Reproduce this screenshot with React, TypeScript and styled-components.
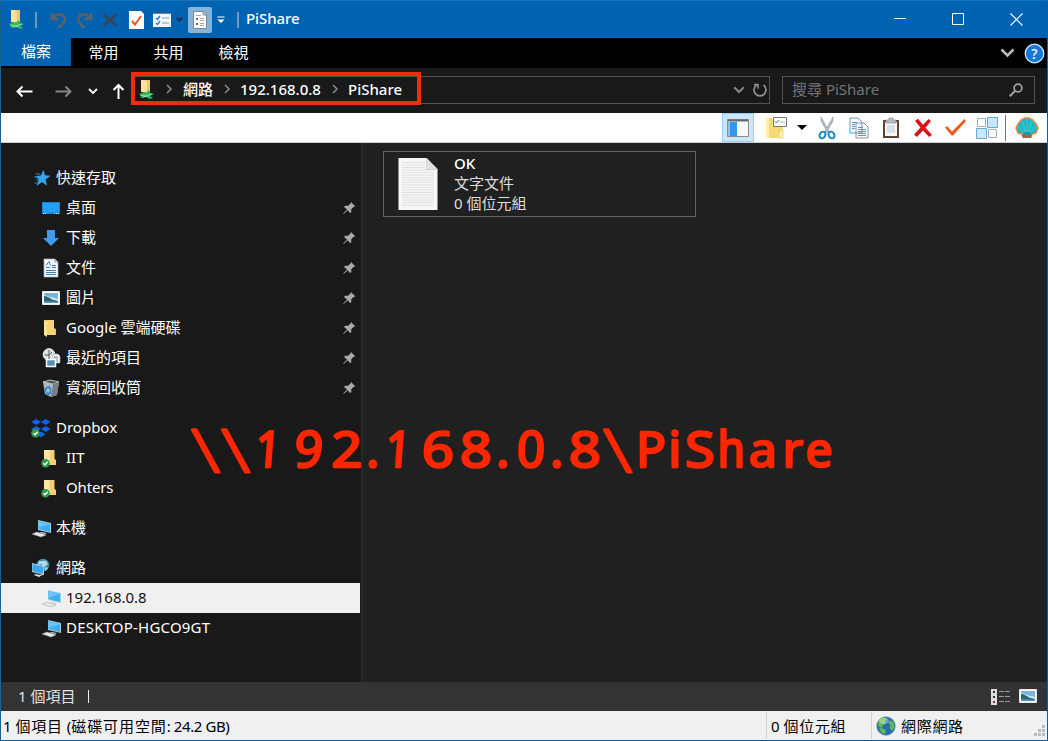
import React from "react";
import styled, { createGlobalStyle } from "styled-components";

const GlobalStyle = createGlobalStyle`
  * { box-sizing: border-box; }
  body { margin: 0; background: #191919; overflow: hidden; }
  svg { display: block; flex: none; }
`;

const Window = styled.div`
  position: relative;
  width: 1048px;
  height: 741px;
  display: flex;
  flex-direction: column;
  border: 1px solid #0063b1;
  border-top: 0;
  border-left-color: #1d608e;
  background: #191919;
  color: #fff;
  font-family: "Noto Sans", "Noto Sans CJK TC", sans-serif;
  font-size: 15px;
  line-height: 20px;
  white-space: nowrap;
`;

const TitleBar = styled.header`
  height: 38px;
  display: flex;
  align-items: center;
  background: #0063b1;
  border-top: 1px solid #1872b8;
`;

const QuickButton = styled.span<{ $w: number; $active?: boolean }>`
  width: ${(p) => p.$w}px;
  height: 26px;
  display: flex;
  align-items: center;
  justify-content: center;
  border-radius: 2px;
  background: ${(p) => (p.$active ? "#83b5dd" : "transparent")};
`;

const TitleDivider = styled.span<{ $left: number; $right: number }>`
  width: 2px;
  height: 16px;
  margin: 0 ${(p) => p.$right}px 0 ${(p) => p.$left}px;
  background: #6e9ac2;
`;

const Title = styled.h1`
  margin: 0 0 3px;
  font-size: 15px;
  line-height: 20px;
  font-weight: 500;
  letter-spacing: -0.1px;
`;

const WindowControls = styled.div`
  margin: 0 1px 1px auto;
  display: flex;
`;

const WindowButton = styled.span`
  width: 58.5px;
  height: 36px;
  display: flex;
  align-items: center;
  justify-content: center;
`;

const TabBar = styled.nav`
  height: 30px;
  display: flex;
  background: #000;
`;

const Tab = styled.span<{ $file?: boolean }>`
  width: ${(p) => (p.$file ? 70 : 65)}px;
  height: 28px;
  padding-top: ${(p) => (p.$file ? 3 : 4)}px;
  text-align: center;
  background: ${(p) => (p.$file ? "#0063b1" : "transparent")};
`;

const TabTools = styled.div`
  margin: 0 2px 0 auto;
  display: flex;
  align-items: center;
  gap: 9px;
`;

const NavBar = styled.div`
  height: 45px;
  padding-bottom: 1px;
  display: flex;
  align-items: center;
  background: #191919;
`;

const NavArrow = styled.span<{ $w: number }>`
  width: ${(p) => p.$w}px;
  display: flex;
  justify-content: center;
  margin-top: 2px;
`;

const AddressBar = styled.div`
  position: relative;
  width: 637px;
  height: 28px;
  margin-left: 2px;
  display: flex;
  align-items: center;
  border: 1px solid #535353;
  padding-left: 4px;
`;

const AddressHighlight = styled.div`
  position: absolute;
  left: -3px;
  top: -5px;
  width: 290px;
  height: 33px;
  border: 4px solid #f02c0c;
`;

const Crumb = styled.span<{ $w: number }>`
  width: ${(p) => p.$w}px;
  margin-bottom: 2px;
  font-weight: 500;
`;

const CrumbArrow = styled.span<{ $w: number }>`
  width: ${(p) => p.$w}px;
  margin-bottom: 2px;
  display: flex;
`;

const AddressTools = styled.div`
  margin-left: auto;
  display: flex;
  align-items: center;
  gap: 7px;
  padding-right: 1px;
`;

const SearchBox = styled.div`
  width: 253px;
  height: 28px;
  margin-left: 12px;
  padding: 0 11px 0 9px;
  display: flex;
  align-items: center;
  justify-content: space-between;
  border: 1px solid #535353;
  color: #757575;
`;

const SearchHint = styled.span`
  margin-bottom: 2px;
`;

const ToolBar = styled.div`
  height: 30px;
  display: flex;
  align-items: center;
  justify-content: flex-end;
  padding-right: 4px;
  background: #fff;
  border-bottom: 1px solid #cfcfcf;
`;

const Tool = styled.span<{ $w: number; $selected?: boolean }>`
  width: ${(p) => p.$w}px;
  height: 29px;
  display: flex;
  align-items: center;
  justify-content: center;
  border: 1px solid ${(p) => (p.$selected ? "#99cdf7" : "transparent")};
  background: ${(p) => (p.$selected ? "#cce6fc" : "transparent")};
`;

const ToolDivider = styled.span`
  width: 1px;
  height: 26px;
  margin: 0 5px 0 6px;
  background: #777;
`;

const Main = styled.main`
  flex: 1;
  display: flex;
  min-height: 0;
`;

const Sidebar = styled.aside`
  width: 359px;
  padding-top: 20px;
`;

const TreeGroup = styled.div`
  margin-bottom: 10px;
`;

const TreeRow = styled.div<{ $child?: boolean; $selected?: boolean }>`
  height: 30px;
  display: flex;
  align-items: center;
  padding: 0 4px 0 ${(p) => (p.$child ? 40 : 30)}px;
  background: ${(p) => (p.$selected ? "#f0f0f0" : "transparent")};
  color: ${(p) => (p.$selected ? "#101010" : "#fff")};
`;

const TreeIcon = styled.span`
  width: 20px;
  height: 20px;
  margin-right: 5px;
`;

const TreeLabel = styled.span`
  flex: 1;
  margin-top: -3px;
`;

const Splitter = styled.div`
  width: 3px;
  margin-right: 20px;
  border-left: 1px solid #191919;
  background: #2a2a2a;
`;

const Content = styled.section`
  flex: 1;
  display: flex;
  background: #202020;
`;

const FileTile = styled.article`
  width: 313px;
  height: 66px;
  margin-top: 8px;
  padding: 0 0 0 14px;
  display: flex;
  align-items: center;
  border: 1px solid #636363;
`;

const FileInfo = styled.div`
  margin: -3px 0 0 16px;
  display: flex;
  flex-direction: column;
  color: #dedede;
`;

const FileName = styled.strong`
  font-weight: 500;
  color: #fff;
`;

const ItemBar = styled.div`
  height: 29px;
  display: flex;
  align-items: center;
  padding: 0 10px 0 17px;
  background: #333;
  color: #e2e2e2;
`;

const ItemCount = styled.span`
  margin-bottom: 2px;
`;

const Caret = styled.span`
  width: 1px;
  height: 13px;
  margin-left: 13px;
  background: #eee;
`;

const ViewSwitch = styled.div`
  margin-left: auto;
  display: flex;
  gap: 9px;
`;

const StatusBar = styled.footer`
  height: 29px;
  display: flex;
  align-items: center;
  background: #f0f0f0;
  color: #000;
`;

const StatusCell = styled.div<{ $w?: number; $pad: number }>`
  ${(p) => (p.$w ? `width: ${p.$w}px;` : "flex: 1;")}
  height: 27px;
  padding-left: ${(p) => p.$pad}px;
  display: flex;
  align-items: center;
  gap: 5px;
  border-left: ${(p) => (p.$w ? "1px solid #d0d0d0" : "0")};
`;

const Spaced = styled.span<{ $ls: number }>`
  letter-spacing: ${(p) => p.$ls}px;
`;

const Grip = styled.span`
  margin: auto 1px 2px auto;
`;

const Note = styled.svg`
  position: absolute;
  left: 179px;
  top: 410px;
  font-family: "Noto Sans", sans-serif;
  font-size: 50px;
  fill: #ff2600;
  stroke: #ff2600;
  stroke-width: 2.6px;
  stroke-linejoin: round;
  text-anchor: middle;
`;

/* Each mark: glyph, centre x, horizontal scale, vertical scale, slant in degrees. */
const noteGlyphs: [string, number, number, number, number][] = [
  ["\\", 35, 1, 1.18, 15], ["\\", 65, 1, 1.18, 15], ["1", 88, 0.9, 1, -5], ["9", 129, 1, 1, -4],
  ["2", 167, 1.08, 1, 0], [".", 193, 1, 1, 0], ["1", 218, 0.9, 1, -5], ["6", 258, 1.12, 1, 0],
  ["8", 296, 1.12, 1, 0], [".", 323, 1, 1, 0], ["0", 352, 0.98, 1, -2], [".", 377, 1, 1, 0],
  ["8", 405, 1.12, 1, 0], ["\\", 447, 1, 1.18, 15], ["P", 471, 0.98, 1, 0], ["i", 495, 1, 1, 0],
  ["S", 520, 1.08, 1, 0], ["h", 551, 0.88, 1, 0], ["a", 583, 1, 0.93, 0], ["r", 613, 1, 0.93, 0],
  ["e", 639, 0.95, 0.93, 0],
];

const NetFolder = () => (
  <svg width="18" height="21" viewBox="0 0 18 21">
    <path d="M3 1h9v12H3z" fill="#f2c768" />
    <path d="M3 1h3l3 2v11l-6-1z" fill="#ffe398" />
    <path d="M1 15l8-2 1-2 2 2v1l4 1-4 2 3 2-3 1-4-2-4 1-2-1 2-1z" fill="#31b85a" />
    <path d="M2 16l6 1 6-2M5 18l5-1" stroke="#91deaa" fill="none" />
  </svg>
);

const Undo = ({ flip }: { flip?: boolean }) => (
  <svg width="17" height="18" viewBox="0 0 17 18">
    <g transform={flip ? "matrix(-1 0 0 1 17 0)" : undefined} fill="none" stroke="#59616a" strokeWidth="2.800">
      <path d="M2 2v6h6.500" />
      <path d="M2.500 7.500C6 3 11 2 13.500 5s1.500 7-5 11.500" />
    </g>
  </svg>
);

const Chevron = ({ w = 10, color = "#ccc", sw = 1.8 }: { w?: number; color?: string; sw?: number }) => (
  <svg width={w} height={w * 0.65} viewBox="0 0 10 6.5">
    <path d="M1 1l4 4 4-4" fill="none" stroke={color} strokeWidth={sw} />
  </svg>
);

const RightChevron = () => (
  <svg width="7" height="10" viewBox="0 0 7 10">
    <path d="M1 1l4 4-4 4" fill="none" stroke="#8c8c8c" strokeWidth="1.500" />
  </svg>
);

const Arrow = ({ color, up }: { color: string; up?: boolean }) => (
  <svg width="17" height="17" viewBox="0 0 17 17">
    <path
      d={up ? "M8.500 16V2M3.500 7L8.500 2 13.500 7" : "M1.500 8.500h15M6.500 3.500L1.500 8.500 6.500 13.500"}
      fill="none"
      stroke={color}
      strokeWidth="2"
    />
  </svg>
);

const FlippedArrow = styled.span`
  transform: scaleX(-1);
`;

const Star = () => (
  <svg width="20" height="20" viewBox="0 0 20 20">
    <path d="M12.500 2l1.400 5.300 5.600.4-5 3.800 1.500 6.300-5-3.700L5.500 18l2.300-6.300L4.500 8l5.200-.5z" fill="#35a7f2" />
    <path d="M4.500 6H9M3 9h4M5 12h3M3.500 15h3" stroke="#2384c6" strokeWidth="1.100" />
  </svg>
);

const Desktop = () => (
  <svg width="20" height="20" viewBox="0 0 20 20">
    <path d="M1 4h18v12H1z" fill="#1083d9" />
    <path d="M2 5h16v9L2 15z" fill="#22a0f5" />
    <path d="M2 15.500h3M13 15.500h5" stroke="#d7efff" strokeDasharray="1 1" />
  </svg>
);

const Download = () => (
  <svg width="20" height="20" viewBox="0 0 20 20">
    <path d="M6 2h8v8h4l-8 8-8-8h4z" fill="#3e9aea" />
  </svg>
);

const Doc = () => (
  <svg width="20" height="20" viewBox="0 0 20 20">
    <path d="M3 1h11l3 3v15H3z" fill="#f3f6f8" stroke="#aeb6bc" strokeWidth=".7" />
    <path d="M14 1v3h3" fill="none" stroke="#8d969d" />
    <path d="M5 7.500l3-4 1.500 4M5 9.500h4M5 12.500h10M5 14.500h10M5 16.500h10M11 7.500h4M11 9.500h4" stroke="#3f83b5" fill="none" />
  </svg>
);

const Picture = () => (
  <svg width="18" height="14" viewBox="0 0 18 14">
    <path d="M.5.500h17v13H.5z" fill="#fff" stroke="#e5e7e8" />
    <path d="M2 2h14v10H2z" fill="#78b6df" />
    <path d="M2 4l6 2 8 2v2H2z" fill="#d3ebf4" />
    <path d="M2 5c3 0 6 2 8 3.500l6 1.500v1H2z" fill="#31636a" />
    <path d="M2 10l14 .5V12H2z" fill="#4d93b5" />
  </svg>
);

const PicturePad = styled.span`
  display: block;
  padding: 3px 1px;
`;

const Folder = () => (
  <svg width="20" height="20" viewBox="0 0 20 20">
    <path d="M3 2h10v8l2 1v6H5z" fill="#efbd57" />
    <path d="M3 2l3 2v15l-3-2z" fill="#ffe29a" />
    <path d="M6 2h7v9l1 1v5H6z" fill="#f9d477" />
  </svg>
);

const Synced = ({ x, y }: { x: number; y: number }) => (
  <g>
    <circle cx={x} cy={y} r="4.300" fill="#2f9a47" />
    <path d={`M${x - 2} ${y}l1.500 1.500 2.700-3`} fill="none" stroke="#fff" strokeWidth="1.300" />
  </g>
);

const SyncedFolder = () => (
  <svg width="20" height="20" viewBox="0 0 20 20">
    <path d="M3.500 2h10v9l1.500 1v5H6z" fill="#f5cf75" />
    <path d="M3 2h5.500v13H3z" fill="#ffe6a4" />
    <Synced x={4.500} y={15.300} />
  </svg>
);

const Recent = () => (
  <svg width="20" height="20" viewBox="0 0 20 20">
    <circle cx="8" cy="6.500" r="5.800" fill="#dce4e7" stroke="#f5f5f5" />
    <path d="M8 2v5l3-3M3.500 7H8M8 7v4" stroke="#48565d" fill="none" />
    <path d="M12 6h5l2 2v7h-7z" fill="#f6f6f6" stroke="#9ca2a5" strokeWidth=".6" />
    <path d="M13 9h4M13 11h4M13 13h4" stroke="#748087" />
    <path d="M5.500 11.500h9v7h-9z" fill="#5a93b9" stroke="#fff" strokeWidth="1.500" />
  </svg>
);

const Bin = () => (
  <svg width="20" height="20" viewBox="0 0 20 20">
    <path d="M2 4l10 2 6-2-2 13-6 2-6-3z" fill="#aeb6b9" />
    <path d="M2 4l7-2 9 2-6 2z" fill="#4d5356" stroke="#dce0e2" strokeWidth=".8" />
    <path d="M12 6l6-2-2 13-6 2z" fill="#777f83" />
    <path d="M5 10l3-1 2 3M10 13l-2 3-3-1M4 14l1-4" stroke="#2283cf" strokeWidth="1.700" fill="none" />
  </svg>
);

const Dropbox = () => (
  <svg width="20" height="20" viewBox="0 0 20 20">
    <path d="M5.200 1L10 4 5.200 7 .4 4zM14.700 1l4.800 3-4.800 3L10 4zM5.200 8l4.800 3-4.800 3-4.800-3zM14.700 8l4.800 3-4.800 3-4.700-3zM10 13.500l4.500 2.700-4.500 3-4.500-3z" fill="#0c65e9" />
    <Synced x={4.500} y={15.300} />
  </svg>
);

const Computer = () => (
  <svg width="20" height="20" viewBox="1 0 20 20">
    <path d="M8 2l13 3v10L8 12z" fill="#a9cfe0" />
    <path d="M8.500 3l11.500 3v8l-11.500-3z" fill="#3caef3" />
    <path d="M9 3.500l10 3-10 3z" fill="#69c5fb" />
    <path d="M2 16l5-2 9 3-5 2z" fill="#e4e8ea" stroke="#9ca8ae" strokeWidth=".5" />
    <path d="M11 14l6 1-2 1-5-1z" fill="#c6d0d5" />
  </svg>
);

const Network = () => (
  <svg width="20" height="20" viewBox="1 0 20 20">
    <circle cx="13" cy="7" r="6.300" fill="#478ca8" />
    <path d="M9 3c2 1 5-1 7 0l2 3-4 3-3-3-3 1zM15 9l3 1-3 3z" fill="#b7dbe5" />
    <path d="M2 5l12 3v9L2 14z" fill="#a9cfe0" />
    <path d="M2.500 6l10.500 3v7L2.500 13z" fill="#39a8ee" />
    <path d="M5 16l5 1 4-2v1l-5 3-5-2z" fill="#dce5e9" />
  </svg>
);

const Pin = () => (
  <svg width="13" height="14" viewBox="0 0 13 14">
    <path d="M8 1l4.500 4.500-1.700.2-2.600 2.500.1 3L7 12 4.700 9.200.7 13l-.5-.5L4 8.400 1 6l1-1.300 3.100.1 2.600-2.500z" fill="#a5acb0" />
  </svg>
);

const TextFile = () => (
  <svg width="40" height="54" viewBox="0 0 40 54">
    <path d="M.5 1h28L39.500 12v41H.5z" fill="#f6f7f7" />
    {Array.from({ length: 18 }, (_, i) => (
      <path key={i} d={`M4 ${5.500 + i * 2.500}H${i < 3 ? 27 : 36}`} stroke="#d7dadb" strokeWidth=".8" />
    ))}
    <path d="M28.500 1v11.500H39.500z" fill="#dfe2e3" stroke="#bdc1c3" strokeWidth=".5" />
  </svg>
);

const Globe = () => (
  <svg width="20" height="20" viewBox="0 0 20 20">
    <circle cx="10" cy="10" r="9.300" fill="#286bb5" stroke="#7a92a6" strokeWidth=".6" />
    <path d="M2.500 5c2-4 7-4 9-2L9 5l1 3-3 1-1 3-4-2zM14 4l4 3 .5 5-3 3-2-3 1-3-2-2zM5 12l5 2-1 4-3-1-3-4z" fill="#5dbd4e" />
    <ellipse cx="8" cy="5" rx="5" ry="3" fill="#fff" opacity=".35" />
  </svg>
);

const Scissors = () => (
  <svg width="18" height="24" viewBox="0 0 18 24">
    <path d="M3 1l8.500 15-1.500 1L3 5zM15 1L6.500 16 8 17l7-12z" fill="#b4c1c9" stroke="#7a8992" strokeWidth=".5" />
    <ellipse cx="4.500" cy="19" rx="2.800" ry="3.500" transform="rotate(28 4.500 19)" fill="none" stroke="#198ac2" strokeWidth="2" />
    <ellipse cx="13.500" cy="19" rx="2.800" ry="3.500" transform="rotate(-28 13.500 19)" fill="none" stroke="#198ac2" strokeWidth="2" />
  </svg>
);

const Copy = () => (
  <svg width="20" height="22" viewBox="0 0 20 22">
    <path d="M1 1h8l4 4v11H1zM7 6h8l4 4v11H7z" fill="#f6fbff" stroke="#8196a9" />
    <path d="M3 5.500h5M3 7.500h3M3 9.500h3M3 11.500h3M9 10.500h5M9 12.500h8M9 14.500h8M9 16.500h8M9 18.500h8" stroke="#5199ce" />
  </svg>
);

const Clipboard = () => (
  <svg width="18" height="22" viewBox="0 0 18 22">
    <path d="M1 3h16v18H1z" fill="#65432f" />
    <path d="M3 5h12v14H3z" fill="#f5f9fc" />
    <path d="M5 9h8M5 11h8M5 13h8M5 15h8" stroke="#b8cbd9" />
    <path d="M4 6V3h3V1h4v2h3v3z" fill="#b9bec1" stroke="#767c7f" strokeWidth=".6" />
  </svg>
);

const Shell = () => (
  <svg width="24" height="22" viewBox="0 0 24 22">
    <path d="M8 20l-1-3-4-1-2-5 2-4 3-4 4-2h4l4 2 3 4 2 4-2 5-4 1-1 3z" fill="#1ab9c6" stroke="#e78944" strokeWidth="1.500" />
    <path d="M10 17L3 9M11 17L7 4M12 17V2M13 17l4-13M14 17l7-8" stroke="#5fd0d3" strokeWidth=".7" />
    <path d="M7 17h10l-1 4H8z" fill="#a8643f" />
    <path d="M9 15h6l1 3H8z" fill="#1595a8" />
  </svg>
);

const quickAccess: [string, React.FC][] = [
  ["桌面", Desktop],
  ["下載", Download],
  ["文件", Doc],
  ["圖片", () => <PicturePad><Picture /></PicturePad>],
  ["Google 雲端硬碟", Folder],
  ["最近的項目", Recent],
  ["資源回收筒", Bin],
];

const Node = (p: {
  icon: React.FC;
  label: string;
  child?: boolean;
  selected?: boolean;
  pinned?: boolean;
  spacing?: number;
}) => {
  const Icon = p.icon;
  return (
    <TreeRow $child={p.child} $selected={p.selected}>
      <TreeIcon><Icon /></TreeIcon>
      <TreeLabel><Spaced $ls={p.spacing ?? 0}>{p.label}</Spaced></TreeLabel>
      {p.pinned && <Pin />}
    </TreeRow>
  );
};

export default function App() {
  return (
    <Window>
      <GlobalStyle />
      <TitleBar>
        <QuickButton $w={31}><NetFolder /></QuickButton>
        <TitleDivider $left={3} $right={12} />
        <QuickButton $w={18}><Undo /></QuickButton>
        <QuickButton $w={34}><Undo flip /></QuickButton>
        <QuickButton $w={18}>
          <svg width="16" height="16" viewBox="0 0 16 16"><path d="M1.500 2l13 12M14.500 2l-13 12" stroke="#354658" strokeWidth="3" /></svg>
        </QuickButton>
        <QuickButton $w={34}>
          <svg width="15" height="18" viewBox="0 0 15 18">
            <path d="M0 0h12l3 3v15H0z" fill="#fff" />
            <path d="M3 10l3 3.500L12 5" fill="none" stroke="#e95623" strokeWidth="2" />
          </svg>
        </QuickButton>
        <QuickButton $w={18}>
          <svg width="18" height="14" viewBox="0 0 18 14">
            <path d="M0 0h18v14H0z" fill="#f3f8fc" /><path d="M0 .5h18" stroke="#77828a" />
            <path d="M3 5l1.500 1.500L7 3M3 10l1.500 1.500L7 8" fill="none" stroke="#187fca" strokeWidth="1.300" />
            <path d="M9 5h7M9 10h7" stroke="#8f9ca5" />
          </svg>
        </QuickButton>
        <QuickButton $w={17}><Chevron w={7} color="#22303f" sw={3} /></QuickButton>
        <QuickButton $w={24} $active>
          <svg width="14" height="18" viewBox="0 0 14 18">
            <path d="M.5.500H10L13.500 4v13.500H.5z" fill="#fff" stroke="#7c858c" />
            <path d="M10 .5V4h3.500" fill="none" stroke="#7c858c" />
            <path d="M3 8h2M3 13h2" stroke="#616a70" strokeWidth="2" />
            <path d="M3 4.500h5M7 7.500h4M7 9.500h4M7 12.500h4M7 14.500h4" stroke="#a3acb3" />
          </svg>
        </QuickButton>
        <QuickButton $w={18}>
          <svg width="8" height="8" viewBox="0 0 8 8"><path d="M.5 1h7" stroke="#fff" /><path d="M.5 3.500h7L4 7z" fill="#fff" /></svg>
        </QuickButton>
        <TitleDivider $left={7} $right={7} />
        <Title>PiShare</Title>
        <WindowControls>
          <WindowButton><svg width="12" height="12"><path d="M0 5.500h12" stroke="#fff" /></svg></WindowButton>
          <WindowButton><svg width="12" height="12"><path d="M.5.500h11v11H.5z" fill="none" stroke="#fff" /></svg></WindowButton>
          <WindowButton><svg width="13" height="13"><path d="M.5.500l12 12M12.500.5l-12 12" stroke="#fff" strokeWidth="1.200" /></svg></WindowButton>
        </WindowControls>
      </TitleBar>

      <TabBar>
        <Tab $file>檔案</Tab>
        <Tab>常用</Tab>
        <Tab>共用</Tab>
        <Tab>檢視</Tab>
        <TabTools>
          <Chevron w={15} color="#bbb" sw={1.700} />
          <svg width="21" height="21" viewBox="0 0 21 21">
            <circle cx="10.500" cy="10.500" r="9.300" fill="#137bd5" stroke="#cfe5f7" strokeWidth="1.300" />
            <text x="10.500" y="15.500" textAnchor="middle" fontSize="14" fontWeight="500" fill="#fff">?</text>
          </svg>
        </TabTools>
      </TabBar>

      <NavBar>
        <NavArrow $w={46}><Arrow color="#fff" /></NavArrow>
        <NavArrow $w={33}><FlippedArrow><Arrow color="#858585" /></FlippedArrow></NavArrow>
        <NavArrow $w={26}><Chevron w={10} color="#eee" sw={2} /></NavArrow>
        <NavArrow $w={25}><Arrow color="#fff" up /></NavArrow>
        <AddressBar>
          <AddressHighlight />
          <CrumbArrow $w={28}><NetFolder /></CrumbArrow>
          <CrumbArrow $w={17}><RightChevron /></CrumbArrow>
          <Crumb $w={41}>網路</Crumb>
          <CrumbArrow $w={16}><RightChevron /></CrumbArrow>
          <Crumb $w={92}>192.168.0.8</Crumb>
          <CrumbArrow $w={16}><RightChevron /></CrumbArrow>
          <Crumb $w={60}>PiShare</Crumb>
          <AddressTools>
            <Chevron w={12} color="#888" sw={1.700} />
            <svg width="16" height="16" viewBox="0 0 16 16">
              <path d="M4.500 3A6 6 0 1 0 11.500 3" fill="none" stroke="#929292" strokeWidth="1.700" />
              <path d="M2 2.500h4v4" fill="none" stroke="#929292" strokeWidth="1.500" />
            </svg>
          </AddressTools>
        </AddressBar>
        <SearchBox>
          <SearchHint>搜尋 PiShare</SearchHint>
          <svg width="14" height="14" viewBox="0 0 14 14">
            <circle cx="9" cy="5" r="3.900" fill="none" stroke="#a5a5a5" strokeWidth="1.700" />
            <path d="M6.200 7.800L.8 13.200" stroke="#a5a5a5" strokeWidth="2" />
          </svg>
        </SearchBox>
      </NavBar>

      <ToolBar>
        <Tool $w={32} $selected>
          <svg width="22" height="18" viewBox="0 0 22 18">
            <path d="M.5.500h21v17H.5z" fill="#f6faff" stroke="#8b8b8b" />
            <path d="M1 1.500h20" stroke="#686868" strokeWidth="2" />
            <path d="M1 3h9v14H1z" fill="#3398eb" /><path d="M1 3h2v14H1z" fill="#8ac4f3" />
          </svg>
        </Tool>
        <Tool $w={43}>
          <svg width="22" height="24" viewBox="0 0 22 24">
            <path d="M1 2h6l2 2h9v18H1z" fill="#f7d878" /><path d="M1 2h3v20H1z" fill="#fff0ae" />
            <path d="M14 16l4-3v9h-4z" fill="#fff2b4" stroke="#e0bd59" strokeWidth=".6" />
            <path d="M8.500 1.500h13v9h-13z" fill="#fff" stroke="#777" />
            <path d="M10 5.500l1.500 1.500L14 4" stroke="#337fc1" fill="none" /><path d="M15 6h5" stroke="#aaa" />
          </svg>
        </Tool>
        <Tool $w={9}><svg width="10" height="5"><path d="M0 0h10L5 5z" fill="#000" /></svg></Tool>
        <Tool $w={41}><Scissors /></Tool>
        <Tool $w={24}><Copy /></Tool>
        <Tool $w={40}><Clipboard /></Tool>
        <Tool $w={24}><svg width="20" height="20" viewBox="0 0 20 20"><path d="M2 3L5 .8l5 6L15.500 1 18 3l-5.500 6.700L19 17l-3 2-6-6.500L4 19l-3-2.500 6.500-7z" fill="#da121a" /></svg></Tool>
        <Tool $w={40}><svg width="22" height="19" viewBox="0 0 22 19"><path d="M1 9.500l2-1.500 5 5.500L20.500 1 22 3 9 17.500H7.500z" fill="#ee5b1e" /></svg></Tool>
        <Tool $w={24}>
          <svg width="22" height="22" viewBox="0 0 22 22">
            <path d="M1.500 1.500h8v8h-8zM12.500 12.500h8v8h-8z" fill="#fafdff" stroke="#9eafc0" />
            <path d="M11.500.5h10v10h-10zM.5 11.500h10v10H.5z" fill="#c7e7fa" stroke="#64a8d4" />
          </svg>
        </Tool>
        <ToolDivider />
        <Tool $w={32}><Shell /></Tool>
      </ToolBar>

      <Main>
        <Sidebar>
          <TreeGroup>
            <Node icon={Star} label="快速存取" />
            {quickAccess.map(([label, icon]) => <Node key={label} icon={icon} label={label} child pinned />)}
          </TreeGroup>
          <TreeGroup>
            <Node icon={Dropbox} label="Dropbox" />
            <Node icon={SyncedFolder} label="IIT" child />
            <Node icon={SyncedFolder} label="Ohters" child spacing={-0.15} />
          </TreeGroup>
          <TreeGroup><Node icon={Computer} label="本機" /></TreeGroup>
          <TreeGroup>
            <Node icon={Network} label="網路" />
            <Node icon={Computer} label="192.168.0.8" child selected />
            <Node icon={Computer} label="DESKTOP-HGCO9GT" child spacing={0.2} />
          </TreeGroup>
        </Sidebar>
        <Content>
          <Splitter />
          <FileTile>
            <TextFile />
            <FileInfo>
              <FileName>OK</FileName>
              <span>文字文件</span>
              <span>0 個位元組</span>
            </FileInfo>
          </FileTile>
        </Content>
      </Main>

      <ItemBar>
        <ItemCount>1 個項目</ItemCount>
        <Caret />
        <ViewSwitch>
          <svg width="19" height="16" viewBox="0 0 19 16">
            <path d="M0 0h6v16H0z" fill="#ddd" />
            <path d="M2 2h2v2H2zM2 7h2v2H2z" fill="#333" /><path d="M2 12h2v2H2z" fill="#a02727" />
            <path d="M8 2.500h11M8 7.500h11M8 12.500h11" stroke="#999" strokeDasharray="5 1" />
          </svg>
          <Picture />
        </ViewSwitch>
      </ItemBar>
      <StatusBar>
        <StatusCell $pad={2}>
          <span>1 <Spaced $ls={0.8}>個項目</Spaced> (<Spaced $ls={0.9}>磁碟可用空間</Spaced><Spaced $ls={-0.400}>: 24.2 GB)</Spaced></span>
        </StatusCell>
        <StatusCell $w={105} $pad={4}><span>0 <Spaced $ls={0.7}>個位元組</Spaced></span></StatusCell>
        <StatusCell $w={176} $pad={4}>
          <Globe /><Spaced $ls={0.7}>網際網路</Spaced>
          <Grip>
            <svg width="12" height="12"><path d="M8 0h3v3H8zM4 4h3v3H4zM8 4h3v3H8zM0 8h3v3H0zM4 8h3v3H4zM8 8h3v3H8z" fill="#bcbcbc" /></svg>
          </Grip>
        </StatusCell>
      </StatusBar>

      <Note width="670" height="80">
        {noteGlyphs.map(([glyph, x, sx, sy, slant], i) => (
          <text
            key={i}
            transform={`translate(${x} ${glyph === "\\" ? 62 : 57}) scale(${sx} ${sy}) skewX(${slant})`}
            x={glyph === "\\" ? -4.500 : slant ? -1.500 : 0}
          >
            {glyph}
          </text>
        ))}
      </Note>
    </Window>
  );
}
